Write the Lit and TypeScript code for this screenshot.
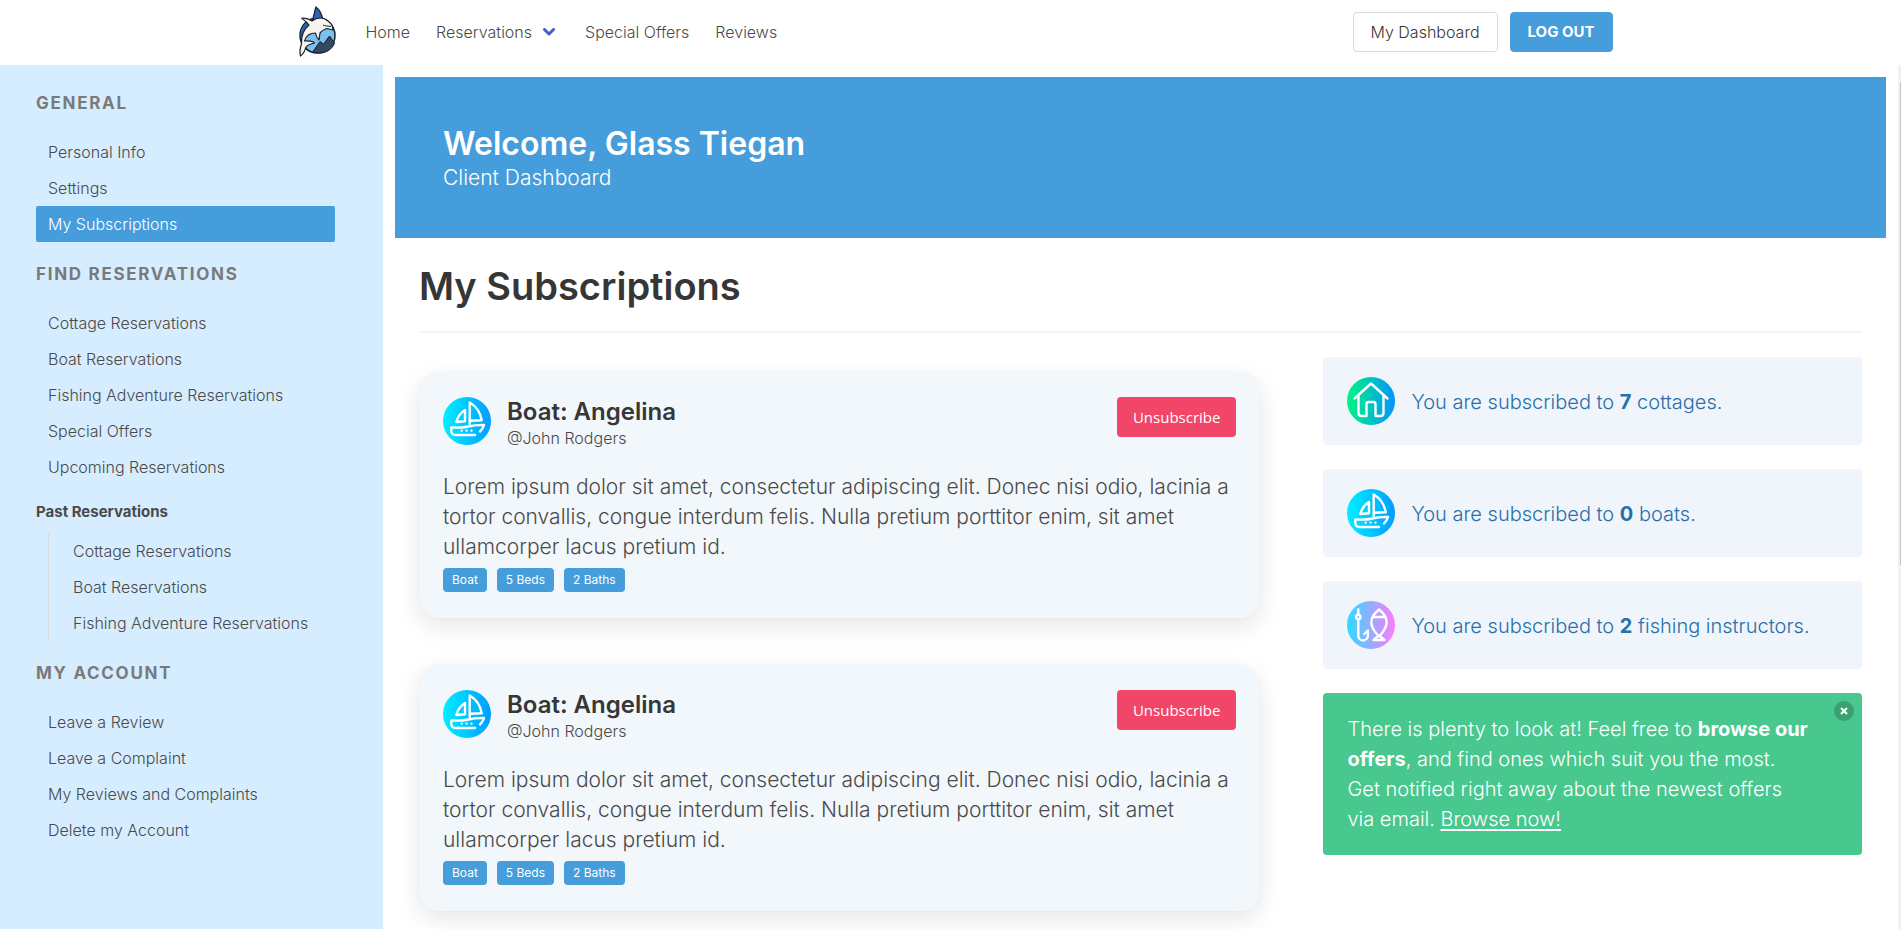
import { LitElement, html, css, svg, nothing } from "lit";
import { customElement, property, state } from "lit/decorators.js";
import { classMap } from "lit/directives/class-map.js";

type Kind = "cottage" | "boat" | "fishing";

const GRADIENTS: Record<Kind, [string, string]> = {
  cottage: ["#00f580", "#0094ff"],
  boat: ["#00f0ff", "#009dff"],
  fishing: ["#2edcff", "#ff7bfd"],
};

const GLYPHS = {
  cottage: svg`
    <path d="M7.5 21.5 24 6.5l16.500 15" />
    <path d="M11.500 19v17q0 3 3 3h5V27q0-2 2-2h5q2 0 2 2v12h5q3 0 3-3V19" />`,
  boat: svg`
    <path d="M26.700 27V5.500C33.500 9.500 37.500 16 38.700 23.300l-12 .5" />
    <path d="M22 13v11.200l-8.700.8q2.200-8 8.700-12Z" />
    <path d="M32 38H12.500Q8.500 38 8.300 34V30.500q11.200.6 17.200-1 6-1.700 15.500-1.500-1.200 4-4 6.500" />
    <path d="M18.700 33.600h.01M23.600 33.600h.01M28.500 33.600h.01" />`,
  fishing: svg`
    <path d="M11.300 8.500v5" /><circle cx="11.300" cy="16" r="2.200" />
    <path d="M11.300 18.500v16a4.800 5 0 0 0 9.600 0V29.500l-3.700 3.500" />
    <path d="M32 8.500C42 16.500 42.500 25 32 35.500 21.500 25 22 16.500 32 8.500ZM27 16h10M32 34.500l-5.500 4.500h11Z" />`,
};

@customElement("kind-icon")
class KindIcon extends LitElement {
  static styles = css`
    :host { display: block; flex: none; width: 48px; height: 48px; }
    svg { display: block; width: 100%; height: 100%; }
    .glyph { fill: none; stroke: #fff; stroke-width: 2.400; stroke-linecap: round; stroke-linejoin: round; }
  `;
  @property() kind: Kind = "boat";
  render() {
    const [from, to] = GRADIENTS[this.kind];
    return html`<svg viewBox="0 0 48 48" aria-hidden="true">
      <defs><linearGradient id="fill"><stop offset="0" stop-color=${from} /><stop offset="1" stop-color=${to} /></linearGradient></defs>
      <circle cx="24" cy="24" r="24" fill="url(#fill)" />
      <g class="glyph">${GLYPHS[this.kind]}</g>
    </svg>`;
  }
}

@customElement("top-bar")
class TopBar extends LitElement {
  static styles = css`
    :host { display: block; flex: none; background: #fff; }
    .inner { display: flex; align-items: center; max-width: 1344px; height: 65px; margin: 0 auto; padding: 0 10px 1px 18px; box-sizing: border-box; }
    a { color: #4a4a4a; text-decoration: none; }
    .logo { display: flex; margin-right: 16px; }
    .logo svg { width: 40px; height: 52px; }
    nav { display: flex; flex: 1; }
    .link { display: flex; align-items: center; gap: 11px; padding: 0 13px; line-height: 24px; }
    .drop { padding-right: 17px; }
    .chevron { width: 12px; height: 8px; fill: none; stroke: #485fc7; stroke-width: 3; stroke-linecap: round; stroke-linejoin: round; }
    .actions { display: flex; gap: 12px; }
    .btn { height: 40px; padding: 0 17px; box-sizing: border-box; border: 1px solid #dbdbdb; border-radius: 4px; background: #fff; color: #363636; font: inherit; cursor: pointer; }
    .primary { border-color: #459ddb; background: #459ddb; color: #fff; font-size: 15px; font-weight: 700; }
  `;
  render() {
    return html`<header class="inner">
      <a class="logo" href="#" aria-label="Home page">
        <svg viewBox="0 0 40 52">
          <circle cx="20.500" cy="29.500" r="17.500" fill="#7cc0ef" stroke="#17202c" stroke-width="1.500" />
          <path d="M3.800 32C2.500 24 7 16 14 14l2 9Z" fill="#2f63b0" />
          <path d="M16 45.500l7-10 3.500 2.500 6-8 5 7c-2 6-8 10-15 10-3 0-5-.5-6.500-1.500Z" fill="#34495f" stroke="#17202c" stroke-width="1" />
          <path d="M15 15c2-4 2-9 4-14 4 3 6 8 7 13l-5 3Z" fill="#2f63b0" stroke="#17202c" stroke-width="1.200" />
          <path d="M4.700 12.300C9 11.500 12 13 15 15c5-4 12-4 16 0 3 2 5 5 5 9l-6-1.500c-3 .5-5 2.500-7 4.500l-1 7c-2-2-3-4-3.500-7-5.500 0-9.500 3-11 8 3.500 0 7.500-.5 10 2-4.500 1-8 2-9 5-.5 3-2.500 6-5 8-1-4-.5-8 1-12C4 30 7 23 12 19c-2-3-5-5-7.300-6.700Z" fill="#f7f5ee" stroke="#17202c" stroke-width="1.200" stroke-linejoin="round" />
          <path d="M26 19c2 1 5 1 8 1.500" fill="none" stroke="#17202c" stroke-width="1" />
        </svg>
      </a>
      <nav aria-label="Main">
        <a class="link" href="#">Home</a>
        <a class="link drop" href="#">Reservations
          <svg class="chevron" viewBox="0 0 12 8" aria-hidden="true"><path d="M1.500 1.500 6 6l4.500-4.500" /></svg>
        </a>
        <a class="link" href="#">Special Offers</a>
        <a class="link" href="#">Reviews</a>
      </nav>
      <div class="actions">
        <button class="btn">My Dashboard</button>
        <button class="btn primary">LOG OUT</button>
      </div>
    </header>`;
  }
}

interface MenuGroup { label: string; items: string[]; past?: string[]; }

const MENU: MenuGroup[] = [
  { label: "General", items: ["Personal Info", "Settings", "My Subscriptions"] },
  {
    label: "Find Reservations",
    items: ["Cottage Reservations", "Boat Reservations", "Fishing Adventure Reservations", "Special Offers", "Upcoming Reservations"],
    past: ["Cottage Reservations", "Boat Reservations", "Fishing Adventure Reservations"],
  },
  { label: "My Account", items: ["Leave a Review", "Leave a Complaint", "My Reviews and Complaints", "Delete my Account"] },
];

@customElement("side-menu")
class SideMenu extends LitElement {
  static styles = css`
    :host { display: block; flex: none; width: 383px; padding: 6px 48px 24px 36px; box-sizing: border-box; background: #d6edff; overflow: hidden; }
    h2 { margin: 21px 0 20px; font-size: 17px; line-height: 22px; font-weight: 700; letter-spacing: 0.1em; text-transform: uppercase; color: #7a7a7a; }
    h3 { margin: 9px 0 3px; font-size: 15px; line-height: 36px; font-weight: 700; color: #4a4a4a; }
    ul { list-style: none; margin: 0; padding: 0; }
    a { display: block; padding: 6px 12px; line-height: 24px; border-radius: 2px; color: #4a4a4a; text-decoration: none; }
    .active { background: #459ddb; color: #fff; }
    .nested { margin-left: 12px; padding-left: 12px; border-left: 1px solid #dbdbdb; }
  `;
  @state() private current = "My Subscriptions";
  render() {
    return html`<nav aria-label="Dashboard">${MENU.map((g) => html`
      <h2>${g.label}</h2>
      <ul>${g.items.map((i) => html`<li><a href="#" class=${classMap({ active: i === this.current })}>${i}</a></li>`)}</ul>
      ${g.past ? html`<h3>Past Reservations</h3>
        <ul class="nested">${g.past.map((i) => html`<li><a href="#">${i}</a></li>`)}</ul>` : nothing}
    `)}</nav>`;
  }
}

@customElement("subscription-card")
class SubscriptionCard extends LitElement {
  static styles = css`
    :host { display: block; padding: 25px 24px 26px; border-radius: 20px; background: #f1f7fa; box-shadow: 0 8px 24px rgba(10, 10, 10, 0.1), 0 0 0 1px rgba(10, 10, 10, 0.01); }
    header { display: flex; align-items: flex-start; gap: 16px; margin-bottom: 22px; }
    .who { flex: 1; }
    h3 { margin: 0; font-size: 24px; line-height: 29px; font-weight: 600; color: #363636; }
    .owner { margin: 0; line-height: 24px; }
    .text { margin: 0; font-size: 21px; line-height: 30px; }
    .unsubscribe { height: 40px; padding: 0 16px; border: 0; border-radius: 4px; background: #f14668; color: #fff; font: 400 15px "Open Sans", "Noto Sans", sans-serif; cursor: pointer; }
    .tags { display: flex; gap: 10px; margin: 6px 0 0; padding: 0; list-style: none; }
    .tag { padding: 0 9px; border-radius: 4px; background: #459ddb; color: #fff; font-size: 12px; line-height: 24px; font-weight: 400; }
  `;
  @property() name = "";
  @property() owner = "";
  @property() text = "";
  @property({ attribute: false }) tags: string[] = [];
  render() {
    return html`<header>
        <kind-icon kind="boat"></kind-icon>
        <div class="who"><h3>${this.name}</h3><p class="owner">${this.owner}</p></div>
        <button class="unsubscribe">Unsubscribe</button>
      </header>
      <p class="text">${this.text}</p>
      <ul class="tags">${this.tags.map((t) => html`<li class="tag">${t}</li>`)}</ul>`;
  }
}

const LOREM = "Lorem ipsum dolor sit amet, consectetur adipiscing elit. Donec nisi odio, lacinia a tortor convallis, congue interdum felis. Nulla pretium porttitor enim, sit amet ullamcorper lacus pretium id.";
const SUBSCRIPTIONS = [1, 2].map(() => ({ name: "Boat: Angelina", owner: "@John Rodgers", text: LOREM, tags: ["Boat", "5 Beds", "2 Baths"] }));
const COUNTS: { kind: Kind; count: number; noun: string }[] = [
  { kind: "cottage", count: 7, noun: "cottages" },
  { kind: "boat", count: 0, noun: "boats" },
  { kind: "fishing", count: 2, noun: "fishing instructors" },
];

@customElement("app-root")
class AppRoot extends LitElement {
  static styles = css`
    :host { display: flex; flex-direction: column; height: 100vh; overflow: hidden; background: #fff; color: #4a4a4a; font: 300 16px/24px Inter, "Open Sans", sans-serif; }
    .body { display: flex; flex: 1; min-height: 0; }
    main { flex: 1; min-width: 0; padding: 12px; overflow: hidden; }
    .track { flex: none; width: 3px; padding-top: 17px; box-sizing: border-box; background: #f1f1f1; }
    .thumb { width: 1px; height: 57%; margin-left: auto; background: #c1c1c1; }
    .hero { padding: 48px; background: #459ddb; color: #fff; }
    .hero h1 { margin: 0; font-size: 32px; line-height: 38px; font-weight: 600; }
    .hero p { margin: 0; padding-top: 2px; font-size: 21px; line-height: 25px; }
    .content { padding: 24px; }
    h2 { margin: 0; font-size: 38px; line-height: 48px; font-weight: 600; color: #363636; }
    hr { height: 2px; margin: 21px 0 24px; border: 0; background: #f5f5f5; }
    .columns { display: grid; grid-template-columns: 25fr 16fr; gap: 63px; align-items: start; }
    .cards { display: grid; gap: 47px; padding-top: 15px; }
    .notes { display: grid; gap: 24px; font-size: 20px; line-height: 30px; }
    .note { display: flex; align-items: center; gap: 16px; padding: 20px 24px; border-radius: 4px; background: #eff5fb; color: #296fa8; }
    .note p { margin: 0; padding-top: 2px; }
    .promo p { margin: 0; }
    strong { font-weight: 700; }
    .promo { position: relative; padding: 21px 50px 21px 24px; border-radius: 4px; background: #48c78e; color: #fff; }
    .promo a { color: inherit; text-underline-offset: 3px; }
    .close { position: absolute; top: 8px; right: 8px; display: grid; place-items: center; width: 20px; height: 20px; padding: 0; border: 0; border-radius: 50%; background: rgba(10, 10, 10, 0.2); cursor: pointer; }
    .close svg { width: 8px; height: 8px; stroke: #fff; stroke-width: 2; }
  `;
  @state() private promoOpen = true;
  render() {
    return html`
      <top-bar></top-bar>
      <div class="body">
        <side-menu></side-menu>
        <main>
          <section class="hero"><h1>Welcome, Glass Tiegan</h1><p>Client Dashboard</p></section>
          <section class="content">
            <h2>My Subscriptions</h2>
            <hr />
            <div class="columns">
              <div class="cards">${SUBSCRIPTIONS.map((s) => html`
                <subscription-card .name=${s.name} .owner=${s.owner} .text=${s.text} .tags=${s.tags}></subscription-card>`)}
              </div>
              <div class="notes">
                ${COUNTS.map((c) => html`<div class="note"><kind-icon .kind=${c.kind}></kind-icon>
                  <p>You are subscribed to <strong>${c.count}</strong> ${c.noun}.</p></div>`)}
                ${this.promoOpen ? html`<div class="promo">
                  <button class="close" aria-label="Close" @click=${() => (this.promoOpen = false)}>
                    <svg viewBox="0 0 8 8"><path d="M1 1l6 6M7 1 1 7" /></svg>
                  </button>
                  <p>There is plenty to look at! Feel free to <strong>browse our offers</strong>, and find ones which suit you the most.<br />
                  Get notified right away about the newest offers via email. <a href="#">Browse now!</a></p>
                </div>` : nothing}
              </div>
            </div>
          </section>
        </main>
        <div class="track"><div class="thumb"></div></div>
      </div>`;
  }
}
